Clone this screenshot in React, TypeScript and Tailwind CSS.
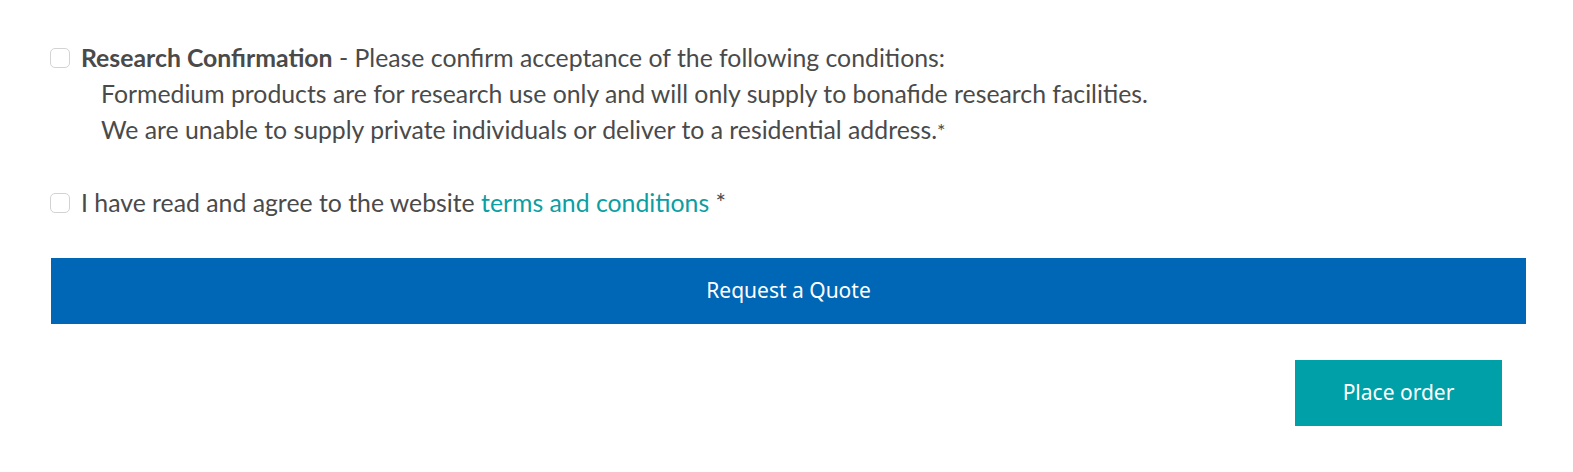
import React, { useState } from 'react';

const App: React.FC = () => {
  const [research, setResearch] = useState(false);
  const [terms, setTerms] = useState(false);

  return (
    <div className="min-h-screen bg-white pl-[51px] pr-[47px] pt-[40px] text-[#4a4a4a]" style={{ fontFamily: 'Lato, "Noto Sans", sans-serif' }}>
      <div className="flex items-start text-[24.8px] leading-[36px]">
        <input
          type="checkbox"
          checked={research}
          onChange={() => setResearch(!research)}
          className="mt-[8px] -ml-px mr-[11px] h-[20px] w-[20px] shrink-0 appearance-none rounded-[5px] border-[1.5px] border-[#d3d3d3] bg-white"
        />
        <div>
          <p>
            <strong className="font-bold">Research Confirmation</strong> - Please confirm acceptance of the following conditions:
          </p>
          <p className="pl-[20px]">Formedium products are for research use only and will only supply to bonafide research facilities.</p>
          <p className="pl-[20px]">
            We are unable to supply private individuals or deliver to a residential address.<span className="text-[20px] align-top">*</span>
          </p>
        </div>
      </div>

      <div className="mt-[37px] flex items-start text-[24.8px] leading-[36px]">
        <input
          type="checkbox"
          checked={terms}
          onChange={() => setTerms(!terms)}
          className="mt-[8px] -ml-px mr-[11px] h-[20px] w-[20px] shrink-0 appearance-none rounded-[5px] border-[1.5px] border-[#d3d3d3] bg-white"
        />
        <p>
          I have read and agree to the website{' '}
          <a href="#" className="text-[#0b9ea3]">terms and conditions</a> *
        </p>
      </div>

      <button
        className="mt-[37px] flex h-[66px] w-full items-center justify-center bg-[#0066b6] text-[21px] text-white"
        style={{ fontFamily: '"Noto Sans", sans-serif' }}
      >
        Request a Quote
      </button>

      <div className="mt-[36px] flex justify-end pr-[24px]">
        <button
          className="flex h-[66px] w-[207px] items-center justify-center bg-[#00a0a8] text-[21px] text-white"
          style={{ fontFamily: '"Noto Sans", sans-serif' }}
        >
          Place order
        </button>
      </div>
    </div>
  );
};

export default App;
